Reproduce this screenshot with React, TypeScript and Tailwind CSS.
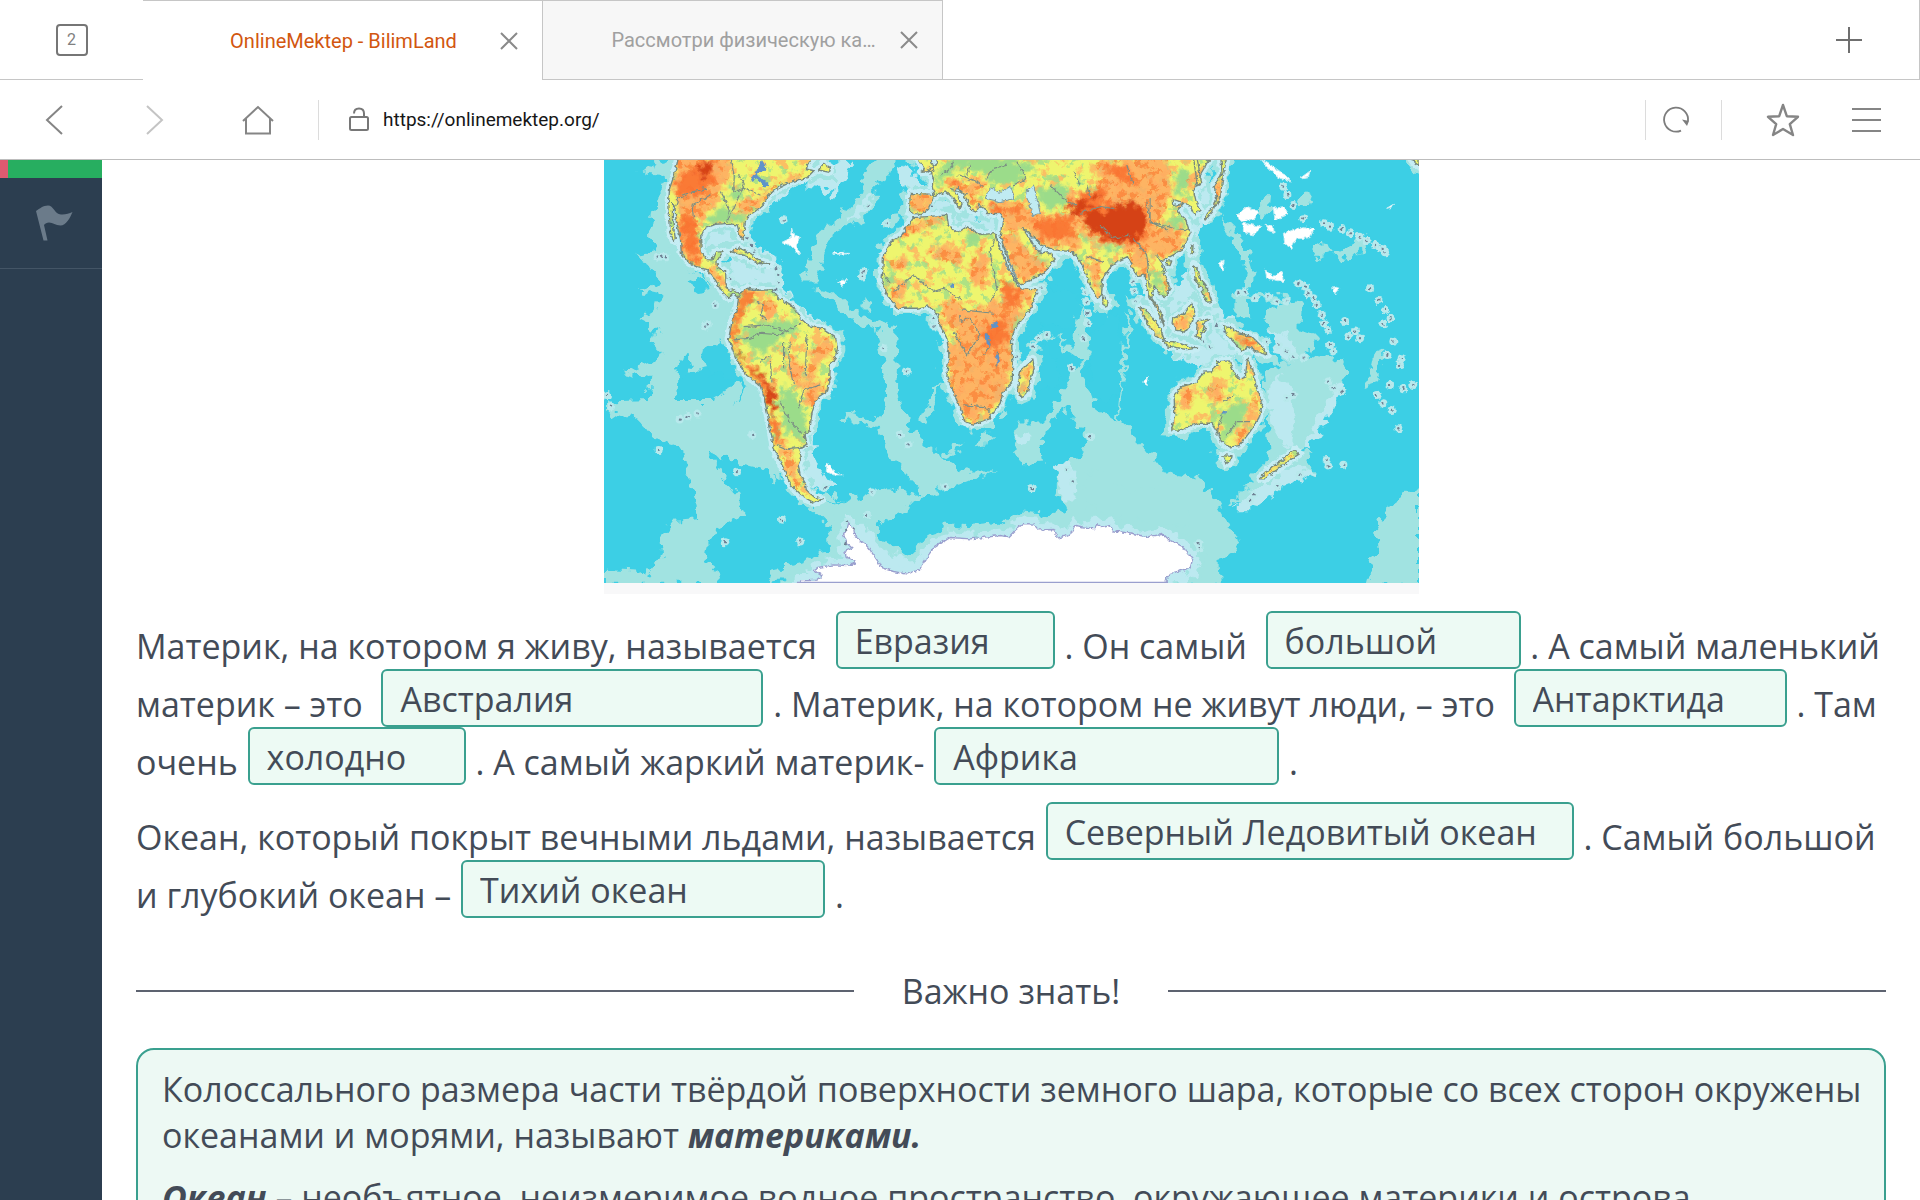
import React from "react";

const LAND = {
  northAmerica:
    "M235 5L222 60 208 100 205 140 208 190 211 235 221 260 225 250 216 190 217 145 224 160 228 200 240 250 243 292 262 318 290 335 320 345 345 375 360 400 373 418 385 431 399 416 412 428 418 420 402 404 384 408 377 385 376 350 352 340 350 318 368 290 345 292 335 315 318 314 303 290 301 250 315 220 345 208 385 205 411 210 420 245 428 252 433 225 435 200 445 183 470 165 490 147 505 120 530 100 560 85 590 76 620 68 640 48 618 42 625 25 640 5Z",
  southAmerica:
    "M415 428L425 410 442 400 475 406 515 405 535 430 580 455 600 490 625 512 670 522 705 545 712 580 705 610 690 630 688 680 682 708 652 728 636 770 628 825 612 842 617 870 595 882 603 905 594 930 600 960 615 985 618 1005 640 1025 666 1034 642 1044 602 1022 572 992 550 940 520 880 510 820 495 745 484 695 440 662 405 605 385 552 395 500 410 462Z",
  africa:
    "M938 188L905 240 875 258 850 300 848 340 845 380 862 422 892 460 950 460 985 453 1012 478 1020 512 1040 550 1046 600 1040 665 1058 710 1078 755 1095 802 1120 808 1165 792 1200 745 1210 708 1236 682 1238 620 1234 560 1242 525 1290 462 1312 405 1262 402 1248 385 1222 330 1196 270 1184 236 1140 238 1100 215 1070 235 1045 212 1040 180 990 184Z",
  eurasia:
    "M1005 5L1012 30 984 42 1000 70 996 95 1002 118 930 115 928 172 962 180 985 162 1000 125 1035 108 1058 128 1078 162 1086 146 1066 112 1072 98 1098 130 1112 165 1130 172 1136 148 1150 155 1160 176 1200 175 1208 192 1200 245 1225 315 1250 380 1262 390 1330 355 1365 312 1342 290 1320 295 1290 255 1265 215 1290 238 1325 270 1360 285 1415 290 1440 320 1455 350 1470 390 1490 432 1504 420 1508 368 1540 325 1582 305 1600 345 1612 365 1635 360 1645 420 1668 460 1692 512 1682 470 1655 430 1662 392 1680 420 1694 425 1710 400 1690 350 1682 320 1705 308 1745 285 1770 235 1756 192 1730 168 1750 145 1718 152 1716 132 1745 142 1768 150 1784 180 1800 165 1788 140 1780 105 1800 60 1832 5Z",
  australia:
    "M1715 825L1724 780 1722 720 1745 695 1790 682 1810 652 1835 650 1852 620 1888 618 1900 650 1920 672 1936 665 1942 612 1958 645 1970 700 1988 745 1976 790 1950 830 1918 872 1888 876 1864 860 1852 830 1835 805 1792 805 1742 826Z",
  madagascar: "M1262 645L1298 612 1302 640 1280 718 1262 726 1252 700Z",
  borneo: "M1718 490L1748 478 1775 445 1784 470 1775 505 1755 532 1728 525 1716 505Z",
  sumatra: "M1618 458L1640 465 1680 520 1693 556 1675 548 1645 510Z",
  java: "M1690 560L1720 560 1765 575 1790 580 1760 584 1700 572Z",
  sulawesi: "M1792 498L1830 492 1808 505 1816 520 1802 540 1805 552 1788 545Z",
  newGuinea: "M1870 512L1895 520 1910 532 1955 545 1985 575 2000 600 1970 590 1945 575 1925 590 1900 560 1880 540Z",
  japan: "M1862 5L1866 55 1850 80 1842 95 1850 130 1838 170 1815 195 1822 172 1850 150 1862 120 1868 70 1880 5Z",
  hokkaido: "M1790 5L1805 85 1792 92 1780 5Z",
  philippines: "M1780 330L1795 345 1800 372 1822 400 1836 440 1818 442 1805 400 1785 372Z",
  sriLanka: "M1508 422L1524 440 1520 455 1508 448Z",
  cuba: "M390 290L415 278 450 295 480 318 510 328 470 325 440 305 410 295Z",
  newZealand: "M1978 972L2010 940 2048 915 2070 895 2085 885 2098 897 2060 922 2030 945 1995 972Z",
  tasmania: "M1868 902L1896 905 1890 920 1878 928Z",
  britain: "M950 5L975 45 962 52 1004 48 990 5Z",
  newfoundland: "M655 45L670 25 690 38 688 52Z",
  kamchatka: "M2430 5L2440 20 2457 32 2457 5Z",
  hainan: "M1700 318L1715 318 1710 332 1698 330Z",
  taiwan: "M1772 275L1782 272 1780 296 1773 294Z",
};

const ANTARCTICA =
  "M590 1290L602 1278 650 1276 666 1264 640 1246 652 1238 700 1230 740 1232 768 1224 738 1205 734 1190 756 1180 740 1165 730 1140 742 1120 746 1105 760 1118 764 1145 792 1165 806 1180 832 1218 842 1238 880 1250 920 1258 958 1244 985 1200 1000 1180 1050 1148 1110 1152 1200 1142 1226 1146 1245 1126 1270 1106 1300 1108 1315 1125 1362 1124 1372 1150 1395 1144 1412 1136 1424 1112 1485 1122 1490 1106 1505 1118 1530 1112 1540 1128 1600 1136 1640 1146 1690 1138 1708 1156 1750 1176 1762 1196 1778 1212 1770 1240 1710 1256 1698 1274 1700 1290Z";

// Mid-depth sea floor: ridges and plateaus.
const RIDGES = [
  "M235 5L150 30 120 55 190 60 195 110 160 165 150 225 165 290 105 300 135 320 160 355 185 385 110 405 180 420 165 470 120 495 175 525 160 570 190 600 60 655 150 670 145 735 20 740 20 770 120 800 160 845 245 880 260 960 280 1020 300 1090 215 1095 180 1145 185 1200 130 1265 110 1250 11 1245 11 1290 360 1290 345 1245 318 1220 325 1170 350 1120 430 1080 395 1000 350 930 330 890 420 925 480 940 520 975 545 960 530 900 500 850 490 760 470 700 440 690 400 755 425 690 415 680 340 735 230 735 235 660 340 640 320 600 380 550 420 460 250 330 220 220 230 100Z",
  "M890 5L870 60 825 90 825 150 790 195 720 225 690 240 650 380 600 380 625 330 650 240 690 205 740 165 780 120 790 60 830 5Z",
  "M640 395L700 410 780 480 890 515 895 620 890 700 905 760 940 830 1010 900 1090 950 1185 950 1100 985 980 1020 900 1075 830 1110 830 1140 870 1165 910 1200 990 1180 1000 1205 930 1270 740 1260 700 1260 500 1285 510 1245 640 1215 690 1180 680 1100 640 1060 730 1040 860 1000 970 1020 880 920 830 820 720 790 730 770 800 790 840 790 860 700 830 520 760 500 700 450Z",
  "M1240 1165L1340 1090 1400 1060 1370 1010 1370 940 1440 900 1470 850 1390 760 1320 850 1325 920 1260 925 1240 860 1250 800 1330 800 1400 690 1420 660 1440 620 1400 590 1370 540 1310 560 1290 620 1280 560 1360 530 1410 580 1430 520 1350 420 1440 450 1480 560 1440 650 1475 745 1535 790 1550 800 1580 470 1590 480 1555 800 1630 870 1700 955 1800 970 1830 1010 1880 1100 1915 1150 1900 1190 1855 1220 1860 1290 1690 1290 1770 1200 1650 1150 1400 1160Z",
  "M1460 950L1500 940 1540 990 1600 1008 1680 990 1725 985 1740 1020 1770 1050 1765 1115 1640 1110 1500 1080 1460 1070 1455 1000Z",
  "M2300 1290L2330 1180 2325 1130 2360 1060 2410 1025 2457 1000 2457 1290Z",
  "M1990 480L2060 440 2100 450 2095 520 2150 540 2140 580 2110 600 2230 620 2240 650 2200 750 2130 850 2100 890 2150 960 2060 980 1960 1060 1890 1050 1940 1000 2010 920 2000 740 1990 650 2060 620 2020 540Z",
  "M1860 180L1900 220 1940 280 1960 350 1960 400 1930 400 1940 330 1900 270Z",
  "M1980 130L2010 120 2005 190 1980 195Z",
  "M2130 280L2180 265 2200 290 2150 310Z",
  "M2200 300L2260 270 2280 250 2310 260 2250 310 2220 320Z",
  "M1900 410L2080 430 2060 445 1950 430 1950 490 1900 490Z",
  "M2090 125L2115 110 2140 150 2100 160Z",
  "M1140 830L1170 830 1165 875 1130 880Z",
  "M1020 900L1090 860 1080 880 1030 910Z",
  "M1190 5L1150 15 1230 60 1240 100 1300 130 1300 5Z",
  "M860 180L910 178 885 210 850 215Z",
  "M800 430L815 440 805 470 792 460Z",
  "M960 800L1000 710 1030 690 1010 740 970 820Z",
  "M2300 690L2320 600 2345 590 2330 680Z",
];

// Shallow shelf water.
const SHELVES = [
  "M560 30L750 20 745 60 700 130 660 95 600 90 500 160 460 200 450 230 470 280 540 310 548 400 620 470 730 540 700 545 600 500 530 420 400 400 380 290 300 280 310 200 440 170 500 100Z",
  "M620 840L650 800 640 900 670 970 720 985 650 1005 610 970 600 900Z",
  "M740 1110L790 1110 860 1190 930 1220 960 1235 900 1255 840 1245 790 1180Z",
  "M1640 420L1720 420 1760 350 1790 370 1850 440 1900 500 1960 580 1900 610 1810 640 1700 590 1630 520 1600 430Z",
  "M1800 80L1850 90 1840 180 1800 220 1780 300 1740 300 1770 190 1790 130Z",
  "M2000 700L2040 650 2070 700 2085 800 2070 880 2050 870 2020 820Z",
  "M1900 1060L2000 980 2080 930 2150 955 2040 1000 1960 1060Z",
  "M2220 680L2235 690 2180 800 2120 880 2110 870 2150 800Z",
  "M1365 935L1400 920 1430 960 1425 1040 1390 1040Z",
  "M930 30L960 90 980 130 920 130 890 40Z",
  "M1000 140L1060 130 1110 170 1130 200 1200 180 1190 230 1110 220 1080 230 1040 180 990 175Z",
  "M1670 1150L1710 1150 1790 1210 1810 1240 1740 1285 1700 1285 1770 1220Z",
  "M2010 520L2060 540 2100 600 2080 620 2030 590Z",
  "M800 130L815 100 825 110 800 165 740 200 770 160Z",
  "M1240 850L1290 835 1300 855 1250 870Z",
];

const BASINS = [
  "M232 655L245 605 268 600 275 640 260 670 235 675Z",
  "M300 600L340 570 395 560 410 610 430 660 395 665 340 655Z",
  "M262 385L300 375 330 400 290 405Z",
  "M1260 690L1280 740 1340 700 1390 690 1375 640 1340 560 1300 600 1300 690Z",
  "M1465 560L1540 470 1570 560 1555 700 1530 750 1470 730Z",
  "M1255 500L1300 460 1350 400 1420 410 1440 460 1420 530 1330 500 1300 560Z",
];

const HIGHLANDS = [
  "M235 5L222 60 215 110 235 150 240 240 245 295 275 325 300 335 305 285 290 240 300 190 340 150 360 110 390 60 385 5Z",
  "M400 165L440 130 480 125 475 155 430 175Z",
  "M480 120L560 70 610 50 600 70 520 100 490 140Z",
  "M310 335L370 360 378 400 360 390Z",
  "M480 440L520 435 530 465 500 495 480 470Z",
  "M570 590L600 620 620 660 600 700 560 650Z",
  "M650 560L690 545 700 580 650 640 630 700 615 690 625 620Z",
  "M610 690L680 680 640 760 610 740Z",
  "M905 235L950 200 1030 185 1010 205 950 225 915 245Z",
  "M985 290L1040 260 1090 310 1080 330 1000 310Z",
  "M1110 330L1145 270 1165 350 1150 400 1110 380Z",
  "M1020 450L1060 430 1100 470 1200 440 1215 380 1300 410 1240 510 1230 680 1200 740 1120 800 1090 790 1050 700 1045 590 1080 540 1030 500Z",
  "M870 400L910 380 920 420 880 440Z",
  "M865 320L920 310 920 340 880 340Z",
  "M930 120L990 120 970 170 935 170Z",
  "M1030 95L1075 75 1105 90 1140 60 1160 90 1120 110 1145 145 1110 150 1070 100Z",
  "M1155 150L1230 140 1280 150 1330 190 1430 160 1440 280 1330 270 1270 220 1200 250 1260 385 1350 340 1290 290 1215 215Z",
  "M1400 120L1480 110 1500 60 1480 20 1640 5 1710 15 1715 120 1700 160 1670 220 1760 220 1740 280 1690 310 1640 290 1640 370 1600 340 1580 280 1480 260 1430 200Z",
  "M1460 330L1500 310 1500 370 1488 420Z",
  "M1680 350L1700 380 1700 410 1685 370Z",
  "M1760 70L1790 60 1780 110 1760 120Z",
  "M1745 700L1780 690 1780 740 1740 760Z",
  "M1820 690L1870 690 1870 740 1830 740Z",
  "M1960 720L1975 750 1945 820 1920 865 1900 870 1930 810Z",
  "M1880 540L1950 545 1985 580 1920 560Z",
  "M1722 490L1760 485 1775 460 1775 500 1750 520 1725 515Z",
  "M1270 640L1295 620 1290 650 1275 712 1262 710Z",
  "M1632 470L1685 545 1670 540Z",
  "M1985 965L2060 910 2090 890 2030 940Z",
  "M530 850L560 870 590 930 600 990 590 1005 560 950Z",
  "M1848 85L1868 90 1850 160 1830 175Z",
];

const PEAKS = [
  "M240 60L310 20 340 5 345 80 310 110 280 130 240 120 225 90Z",
  "M240 170L290 190 295 280 270 310 250 280Z",
  "M260 290L300 320 290 335Z",
  "M415 430L445 400 475 408 440 450 415 500 405 600 450 640 490 665 520 720 530 800 545 870 520 860 500 740 470 680 400 600 388 550 400 480Z",
  "M915 225L945 210 940 225 920 240Z",
  "M1205 370L1235 380 1260 420 1240 460 1215 450Z",
  "M1150 510L1225 490 1220 560 1170 590 1150 560Z",
  "M1050 85L1080 78 1075 90 1040 100Z",
  "M1400 150L1440 120 1510 95 1530 110 1500 140 1560 160 1600 140 1640 160 1640 250 1600 265 1520 255 1460 220 1440 180Z",
  "M1290 200L1420 180 1410 250 1340 260Z",
  "M1500 30L1580 35 1610 90 1570 80Z",
  "M1910 540L1960 555 1975 575 1925 560Z",
  "M1160 155L1230 155 1270 150 1260 170 1180 172Z",
];

const SUMMITS = [
  "M1445 190L1480 160 1510 175 1550 145 1610 140 1640 180 1632 235 1595 262 1530 258 1475 225Z",
  "M1400 150L1460 130 1500 105 1490 125 1430 185Z",
  "M290 35L330 15 340 50 310 70Z",
  "M495 670L520 700 528 790 510 780 500 730Z",
  "M440 640L490 660 480 668Z",
  "M410 580L430 600 425 620Z",
];

const LOWLANDS = [
  "M318 205L345 160 375 150 400 175 450 170 435 195 345 208Z",
  "M385 110L430 90 425 130 395 140Z",
  "M330 315L368 290 350 330Z",
  "M430 520L520 500 590 500 600 520 550 545 530 570 480 600 430 560Z",
  "M550 690L590 730 620 780 620 870 560 830 540 760Z",
  "M845 360L880 370 860 410Z",
  "M1090 235L1150 245 1170 235 1120 275 1095 265Z",
  "M1005 200L1025 200 1020 225 1005 220Z",
  "M1005 60L1040 30 1050 5 1230 5 1310 30 1250 80 1200 95 1130 45 1070 40 1020 90Z",
  "M1310 100L1400 90 1410 140 1350 170 1320 140Z",
  "M1290 290L1330 310 1355 320 1320 340 1290 310Z",
  "M1420 230L1480 250 1570 280 1540 290 1460 255Z",
  "M1715 185L1760 195 1755 225 1715 210Z",
  "M1650 350L1690 380 1690 415 1660 390Z",
  "M1870 760L1940 730 1930 800 1880 850 1860 790Z",
  "M1890 570L1940 560 1920 590Z",
  "M1230 500L1260 480 1240 560 1235 650Z",
  "M1180 700L1215 680 1205 720 1185 735Z",
  "M1720 90L1750 30 1770 60 1740 130Z",
];

const RIVERS = [
  "M390 15L402 60 400 110 430 100 480 120M415 60L432 90 415 125 400 160 380 200M360 110L385 155 380 200M280 190L275 150 330 120M220 170L235 130 280 110 320 100",
  "M400 555L450 550 480 535 540 540 600 505M430 515L500 510 560 530M470 440L490 450 480 480 500 495M550 560V640M570 560L565 620 580 690M620 540L615 660M510 620L515 680",
  "M595 760L610 705 660 690M540 740L570 800 610 840M510 600L480 620M530 870L560 882 620 875",
  "M880 410L940 360 980 395 1000 410 1030 400 1085 435M1190 235L1170 290 1180 350 1190 400 1170 440M1080 480V500L1110 490 1140 540 1100 600 1060 530M1085 465L1180 475M1160 535L1170 570 1150 600M1195 590L1190 640M1090 750L1150 755 1170 770",
  "M845 350L870 385M1050 100L1100 120M1075 60L1130 80 1150 95M1020 60L1050 40 1060 20M1100 60L1110 30M1160 70L1180 40 1220 30",
  "M1350 90L1400 140 1430 150M1460 90L1470 130M1440 175L1500 155 1540 160M1640 140L1650 200 1700 225M1420 50L1440 90M1600 250L1640 300 1650 400M1580 30L1600 90M1650 130V200L1720 220 1770 225M1500 210L1540 250 1590 240M1460 305L1510 320M1670 300L1700 350M1250 20L1280 70 1240 90",
  "M1868 775L1850 840M1880 840L1910 800 1950 800M1870 740L1900 720",
];

const LAKES = [
  "M485 15L500 40 470 60 490 75 510 90 490 95 470 70 450 80 470 45Z",
  "M1172 505L1192 500 1195 520 1175 522Z",
  "M1156 532L1166 545 1170 575 1160 570Z",
  "M1052 385L1062 388 1058 402 1050 396Z",
  "M1190 590L1197 610 1194 635 1188 612Z",
  "M1868 768L1878 765 1876 778 1868 780Z",
];

const INLAND_SEAS = [
  "M1155 130L1170 98 1200 112 1230 95 1245 130 1200 140Z",
  "M1283 105L1300 90 1308 120 1320 175 1295 182 1290 150 1278 125Z",
  "M1190 255L1215 280 1250 370 1246 382 1218 330Z",
  "M1290 240L1330 275 1320 292 1300 275Z",
];

const SNOW = [
  "M545 262L570 250 574 218 580 240 598 248 588 270 600 304 575 275Z",
  "M712 378L742 374 726 394Z",
  "M680 925L690 930 695 945 726 960 700 960 678 950Z",
  "M1912 180L1940 155 1975 170 1965 190 1920 200Z",
  "M1930 205L1985 215 1960 240 1930 232Z",
  "M2020 160L2050 155 2065 178 2025 195Z",
  "M2050 235L2110 215 2142 222 2130 248 2090 252 2075 280 2055 268Z",
  "M1998 208L2020 212 2022 235 2005 230Z",
  "M1995 345L2020 365 2045 350 2050 380 2000 370Z",
  "M1855 325L1872 315 1870 350Z",
  "M2198 395L2218 400 2205 420Z",
  "M1985 15L2020 35 2055 60 2072 78 2040 70 2000 35Z",
  "M1630 680L1645 665 1640 695Z",
  "M2360 160L2380 148 2378 156Z",
  "M698 293L745 292 744 297 698 298Z",
  "M2100 70L2130 48 2125 65Z",
];

// Chains of small islands: [x, y] pairs.
const ISLETS: number[][] = [
  [2172, 205], [2190, 215], [2225, 222], [2250, 235], [2278, 245], [2300, 258], [2325, 270], [2345, 282], [2355, 292],
  [2095, 385], [2115, 395], [2125, 415], [2140, 430], [2150, 450], [2165, 480], [2172, 505], [2185, 525],
  [1915, 415], [1935, 412], [1965, 430], [2005, 425], [2030, 440], [2060, 440],
  [2050, 95], [2062, 120], [2080, 150], [2110, 190], [2310, 400], [2335, 435], [2355, 465], [2372, 490], [2350, 508],
  [2235, 498], [2245, 545], [2265, 530], [2280, 550], [2190, 570], [2200, 590], [2380, 560], [2362, 600], [2405, 610], [2400, 630],
  [2330, 720], [2350, 745], [2375, 765], [2395, 820], [2370, 690], [2410, 700], [2440, 690],
  [2185, 680], [2200, 700], [2225, 710], [2060, 730], [2080, 720],
  [1455, 410], [1458, 440], [1462, 475], [1462, 505], [1450, 550], [1600, 380], [1603, 410], [1606, 440],
  [1325, 398], [1340, 540], [1315, 550], [1300, 575], [1250, 605], [1400, 945], [1418, 980], [1470, 845],
  [1960, 1018], [1950, 1038], [2035, 995], [2098, 960], [1795, 1165], [1798, 1180], [2180, 915], [2185, 935], [2230, 930],
  [805, 152], [790, 350], [785, 365], [550, 196], [315, 515], [322, 508], [172, 305], [185, 305], [197, 307], [345, 450],
  [850, 580], [920, 650], [900, 840], [925, 868], [1035, 995], [815, 1010], [800, 1080], [675, 998], [238, 794], [262, 784], [292, 776],
  [32, 755], [20, 720], [456, 840], [740, 1100], [738, 1125], [736, 1165], [760, 1122], [860, 205], [995, 155], [1000, 490], [1000, 515],
  [545, 1095], [375, 1162], [600, 1160], [175, 885], [410, 952], [1415, 640], [1295, 1000],
  [390, 370], [530, 340], [534, 360], [535, 382], [525, 405], [440, 250], [455, 270], [462, 290],
  [1810, 560], [1830, 575], [1850, 510], [1870, 530], [2000, 560], [2035, 570], [2060, 590], [2080, 605], [2110, 608],
];

function WorldMap() {
  const lands = Object.values(LAND);
  return (
    <svg
      viewBox="11 15 2446 1270"
      className="block h-auto w-full"
      role="img"
      aria-label="Физическая карта мира"
      preserveAspectRatio="xMidYMid slice"
    >
      <defs>
        <filter id="rough" x="-5%" y="-5%" width="110%" height="110%">
          <feTurbulence type="fractalNoise" baseFrequency="0.035" numOctaves="2" seed="4" result="n" />
          <feDisplacementMap in="SourceGraphic" in2="n" scale="52" xChannelSelector="R" yChannelSelector="G" />
          <feGaussianBlur stdDeviation="1.200" />
        </filter>
        <filter id="coast" x="-2%" y="-2%" width="104%" height="104%">
          <feTurbulence type="fractalNoise" baseFrequency="0.08" numOctaves="2" seed="9" result="n" />
          <feDisplacementMap in="SourceGraphic" in2="n" scale="14" xChannelSelector="R" yChannelSelector="G" />
          <feGaussianBlur stdDeviation="0.800" />
        </filter>
        <filter id="relief" x="-5%" y="-5%" width="110%" height="110%">
          <feTurbulence type="fractalNoise" baseFrequency="0.06" numOctaves="3" seed="2" result="n" />
          <feDisplacementMap in="SourceGraphic" in2="n" scale="60" xChannelSelector="R" yChannelSelector="G" />
          <feGaussianBlur stdDeviation="3" />
        </filter>
        <filter id="mottle" x="0" y="0" width="100%" height="100%" colorInterpolationFilters="sRGB">
          <feTurbulence type="fractalNoise" baseFrequency="0.03" numOctaves="3" seed="7" />
          <feColorMatrix values="0 0 0 0 1  0 0 0 0 0.68  0 0 0 0 0.38  9 0 0 0 -4.9" />
        </filter>
        <filter id="greens" x="0" y="0" width="100%" height="100%" colorInterpolationFilters="sRGB">
          <feTurbulence type="fractalNoise" baseFrequency="0.035" numOctaves="3" seed="23" />
          <feColorMatrix values="0 0 0 0 0.62  0 0 0 0 0.87  0 0 0 0 0.54  0 9 0 0 -5.3" />
        </filter>
        <filter id="ranges" x="0" y="0" width="100%" height="100%" colorInterpolationFilters="sRGB">
          <feTurbulence type="fractalNoise" baseFrequency="0.045" numOctaves="3" seed="12" result="n" />
          <feColorMatrix in="n" values="0 0 0 0 0.98  0 0 0 0 0.44  0 0 0 0 0.16  9 0 0 0 -4.8" result="c" />
          <feComposite in="c" in2="SourceAlpha" operator="in" />
        </filter>
        <clipPath id="land">
          {lands.map((d) => (
            <path key={d} d={d} />
          ))}
        </clipPath>
      </defs>

      <rect x="0" y="0" width="2470" height="1300" fill="#3ccfe5" />

      <g filter="url(#rough)">
        <g fill="#a1e3e1">
          {RIDGES.map((d) => (
            <path key={d} d={d} />
          ))}
        </g>
        <g fill="#3ccfe5">
          {BASINS.map((d) => (
            <path key={d} d={d} />
          ))}
        </g>
        <path d={ANTARCTICA} fill="none" stroke="#a1e3e1" strokeWidth="76" />
        <g fill="#bce9f0">
          {SHELVES.map((d) => (
            <path key={d} d={d} />
          ))}
        </g>
        <path d={ANTARCTICA} fill="none" stroke="#bce9f0" strokeWidth="36" />
        <g fill="#a1e3e1" stroke="#a1e3e1" strokeWidth="40">
          {lands.map((d) => (
            <path key={d} d={d} />
          ))}
        </g>
      </g>

      <g filter="url(#coast)" strokeLinejoin="round">
        <g fill="#c6edf4" stroke="#c6edf4" strokeWidth="24">
          {lands.map((d) => (
            <path key={d} d={d} />
          ))}
        </g>
        <g fill="#b8e9ec">
          {ISLETS.map(([x, y]) => (
            <circle key={`${x}-${y}`} cx={x} cy={y} r="12" />
          ))}
        </g>
        <g fill="#ffffff" stroke="#c6edf4" strokeWidth="3">
          {SNOW.map((d) => (
            <path key={d} d={d} />
          ))}
        </g>
        <path d={ANTARCTICA} fill="#ffffff" stroke="#9a9fce" strokeWidth="4" />
      </g>

      <g filter="url(#coast)">
        <g clipPath="url(#land)">
          <rect x="0" y="0" width="2470" height="1300" fill="#eef56e" />
          <rect x="0" y="0" width="2470" height="1300" filter="url(#mottle)" opacity="0.75" />
          <rect x="0" y="0" width="2470" height="1300" filter="url(#greens)" opacity="0.8" />
          <g filter="url(#relief)">
            <g fill="#9bdc8a">
              {LOWLANDS.map((d) => (
                <path key={d} d={d} />
              ))}
            </g>
            <g fill="#ffab62" fillOpacity="0.88">
              {HIGHLANDS.map((d) => (
                <path key={d} d={d} />
              ))}
            </g>
          </g>
          <g filter="url(#ranges)" opacity="0.55">
            {HIGHLANDS.map((d) => (
              <path key={d} d={d} />
            ))}
          </g>
          <g filter="url(#relief)">
            <g fill="#f9702e" fillOpacity="0.85">
              {PEAKS.map((d) => (
                <path key={d} d={d} />
              ))}
            </g>
            <g fill="#cf3a10" fillOpacity="0.85">
              {SUMMITS.map((d) => (
                <path key={d} d={d} />
              ))}
            </g>
          </g>
        </g>
        <g fill="none" stroke="#7c8f84" strokeWidth="3.500" strokeLinejoin="round">
          {RIVERS.map((d) => (
            <path key={d} d={d} />
          ))}
        </g>
        <g fill="#c0ebf2" stroke="#7c9aa0" strokeWidth="3">
          {INLAND_SEAS.map((d) => (
            <path key={d} d={d} />
          ))}
        </g>
        <g fill="#5f93c9">
          {LAKES.map((d) => (
            <path key={d} d={d} />
          ))}
        </g>
        <g fill="none" stroke="#77897f" strokeWidth="4" strokeLinejoin="round">
          {lands.map((d) => (
            <path key={d} d={d} />
          ))}
        </g>
        <g fill="#6e7f92">
          {ISLETS.map(([x, y]) => (
            <circle key={`${x}-${y}`} cx={x} cy={y} r="3.500" />
          ))}
        </g>
      </g>
      <path d="M590 1283H1700" stroke="#9a9fce" strokeWidth="4" />
    </svg>
  );
}

function CloseIcon() {
  return (
    <svg viewBox="0 0 18 18" className="size-[18px]" fill="none" stroke="#8a8a8a" strokeWidth="2">
      <path d="M1 1L17 17M17 1L1 17" />
    </svg>
  );
}

function Tab({ title, active = false }: { title: string; active?: boolean }) {
  return (
    <div
      className={
        active
          ? "flex w-[399px] items-center border-t border-[#c6c6c6] pr-6 pl-11"
          : "flex w-[401px] items-center border border-[#c6c6c6] bg-[#f7f7f7] pr-6 pl-11"
      }
    >
      <button
        className={
          active
            ? "min-w-0 flex-1 text-center text-[20px] leading-7 whitespace-nowrap text-[#d2560f]"
            : "min-w-0 flex-1 text-center text-[20px] leading-7 whitespace-nowrap text-[#a0a0a0]"
        }
      >
        {title}
      </button>
      <button aria-label="Закрыть вкладку">
        <CloseIcon />
      </button>
    </div>
  );
}

function TabStrip() {
  return (
    <div className="flex h-20 shrink-0 bg-white">
      <div className="flex w-[143px] items-center justify-center border-b border-[#c6c6c6]">
        <button className="flex h-8 w-8 items-center justify-center rounded border-2 border-[#767676] text-base text-[#808080]">
          2
        </button>
      </div>
      <Tab title="OnlineMektep - BilimLand" active />
      <Tab title="Рассмотри физическую ка…" />
      <div className="flex flex-1 items-center justify-end border-r border-b border-[#c6c6c6] pr-[57px]">
        <button aria-label="Новая вкладка">
          <svg viewBox="0 0 26 26" className="size-[26px]" stroke="#6f6f6f" strokeWidth="2">
            <path d="M0 13H26M13 0V26" />
          </svg>
        </button>
      </div>
    </div>
  );
}

function Toolbar() {
  return (
    <div className="flex h-20 shrink-0 items-center border-b border-[#bdbdbd] bg-white">
      <button aria-label="Назад" className="ml-[45px]">
        <svg viewBox="0 0 18 30" className="h-[30px] w-[18px]" fill="none" stroke="#858585" strokeWidth="2">
          <path d="M17 1L2 15L17 29" />
        </svg>
      </button>
      <button aria-label="Вперёд" className="ml-[83px]" disabled>
        <svg viewBox="0 0 18 30" className="h-[30px] w-[18px]" fill="none" stroke="#c4c4c4" strokeWidth="2">
          <path d="M1 1L16 15L1 29" />
        </svg>
      </button>
      <button aria-label="Домой" className="ml-[78px]">
        <svg viewBox="0 0 32 30" className="h-[30px] w-8" fill="none" stroke="#858585" strokeWidth="2">
          <path d="M1 16L16 2L31 16M4 13.5V28.500H28V13.500" />
        </svg>
      </button>
      <span className="ml-[44px] h-10 w-px bg-[#dcdcdc]" />
      <svg viewBox="0 0 20 24" className="mb-0.5 ml-[30px] h-6 w-5" fill="none" stroke="#777777" strokeWidth="2">
        <rect x="1" y="10" width="18" height="13" rx="1.500" />
        <path d="M5 6.500C5 3 7 1.500 10 1.500C13 1.500 15 3.500 15 6.500V10" />
      </svg>
      <input
        type="text"
        aria-label="Адрес"
        defaultValue="https://onlinemektep.org/"
        className="ml-[14px] min-w-0 flex-1 bg-transparent text-[19px] leading-7 text-[#161616] outline-none"
      />
      <span className="h-10 w-px bg-[#dcdcdc]" />
      <button aria-label="Обновить" className="ml-4">
        <svg viewBox="0 0 28 28" className="size-7">
          <path d="M19 24.600A12 12 0 1 1 26 15" fill="none" stroke="#7d7d7d" strokeWidth="1.800" />
          <path d="M20 13.500L27 15L25 20Z" fill="#7d7d7d" />
        </svg>
      </button>
      <span className="ml-[31px] h-10 w-px bg-[#dcdcdc]" />
      <button aria-label="Закладки" className="ml-11">
        <svg viewBox="0 0 34 34" className="size-[34px]" fill="none" stroke="#858585" strokeWidth="2.400" strokeLinejoin="round">
          <path d="M17 2L20.800 13.200L32 13.800L23.800 21.200L27 32L17 26L7 32L10.200 21.200L2 13.800L13.200 13.200Z" />
        </svg>
      </button>
      <button aria-label="Меню" className="mr-[39px] ml-[52px]">
        <svg viewBox="0 0 29 26" className="h-[26px] w-[29px]" stroke="#858585" strokeWidth="2">
          <path d="M0 2H29M0 13H29M0 24H29" />
        </svg>
      </button>
    </div>
  );
}

function Sidebar() {
  return (
    <aside className="w-[102px] shrink-0 bg-[#2c3e50]">
      <div className="flex h-[18px] bg-[#27ae60]">
        <span className="w-2 bg-[#dd5a70]" />
      </div>
      <button aria-label="Отметить" className="flex h-[91px] w-full items-center border-b border-[#445566] pl-9">
        <svg viewBox="0 0 37 36" className="h-9 w-[37px]" fill="#6b7b8a">
          <path d="M0 6C4 3.500 7 .5 12 .5C17.500 .5 18.500 9 25 9.500C29.500 9.800 33 8.500 36.500 7C34 13 30 20.500 24.500 20.500C19.500 20.500 17 17.500 13 17.500C11 17.500 9 18.500 8 20L11.500 35.500H7.500Z" />
        </svg>
      </button>
    </aside>
  );
}

function Answer({ label, value, width }: { label: string; value: string; width: string }) {
  return (
    <input
      type="text"
      aria-label={label}
      defaultValue={value}
      className={`${width} mx-px h-[58px] rounded-[6px] border-2 border-[#3aa08f] bg-[#edfaf4] pt-0.5 pr-2 pl-[17px] align-text-bottom leading-[46px] outline-none`}
    />
  );
}

function Lesson() {
  return (
    <main className="min-w-0 flex-1 bg-white px-[34px] font-['Open_Sans','Noto_Sans',sans-serif] text-[34px] leading-[46px] text-[#434b57]">
      <div className="mx-auto w-[815px] max-w-full bg-[#f8f8f9] pb-[11px]">
        <WorldMap />
      </div>

      <p className="mt-[17px]">
        Материк, на котором я живу, называется&nbsp; <Answer label="Мой материк" value="Евразия" width="w-[219px]" /> . Он
        самый&nbsp; <Answer label="Размер Евразии" value="большой" width="w-[255px]" /> . А самый маленький материк –
        это&nbsp; <Answer label="Самый маленький материк" value="Австралия" width="w-[382px]" /> . Материк, на котором не
        живут люди, – это&nbsp; <Answer label="Необитаемый материк" value="Антарктида" width="w-[273px]" /> . Там очень{" "}
        <Answer label="Климат" value="холодно" width="w-[218px]" /> . А самый жаркий материк-{" "}
        <Answer label="Самый жаркий материк" value="Африка" width="w-[345px]" /> .
      </p>
      <p className="mt-[17px]">
        Океан, который покрыт вечными льдами, называется{" "}
        <Answer label="Ледяной океан" value="Северный Ледовитый океан" width="w-[528px]" /> . Самый большой и глубокий океан
        – <Answer label="Самый большой океан" value="Тихий океан" width="w-[364px]" /> .
      </p>

      <h2 className="mt-[50px] flex items-center gap-12">
        <span className="h-0.5 flex-1 bg-[#5d6370]" />
        Важно знать!
        <span className="h-0.5 flex-1 bg-[#5d6370]" />
      </h2>

      <section className="mt-[34px] rounded-[18px] border-2 border-[#3aa08f] bg-[#edf9f4] pt-4 pr-4 pb-6 pl-6">
        <p>
          Колоссального размера части твёрдой поверхности земного шара, которые со всех сторон окружены океанами и морями,
          называют <strong className="font-bold italic">материками.</strong>
        </p>
        <p className="mt-4">
          <strong className="font-bold italic">Океан</strong> – необъятное, неизмеримое водное пространство, окружающее
          материки и острова.
        </p>
      </section>
    </main>
  );
}

export default function App() {
  return (
    <div className="flex h-screen flex-col overflow-hidden bg-white font-[Roboto,sans-serif]">
      <TabStrip />
      <Toolbar />
      <div className="flex min-h-0 flex-1 overflow-hidden">
        <Sidebar />
        <Lesson />
      </div>
    </div>
  );
}
